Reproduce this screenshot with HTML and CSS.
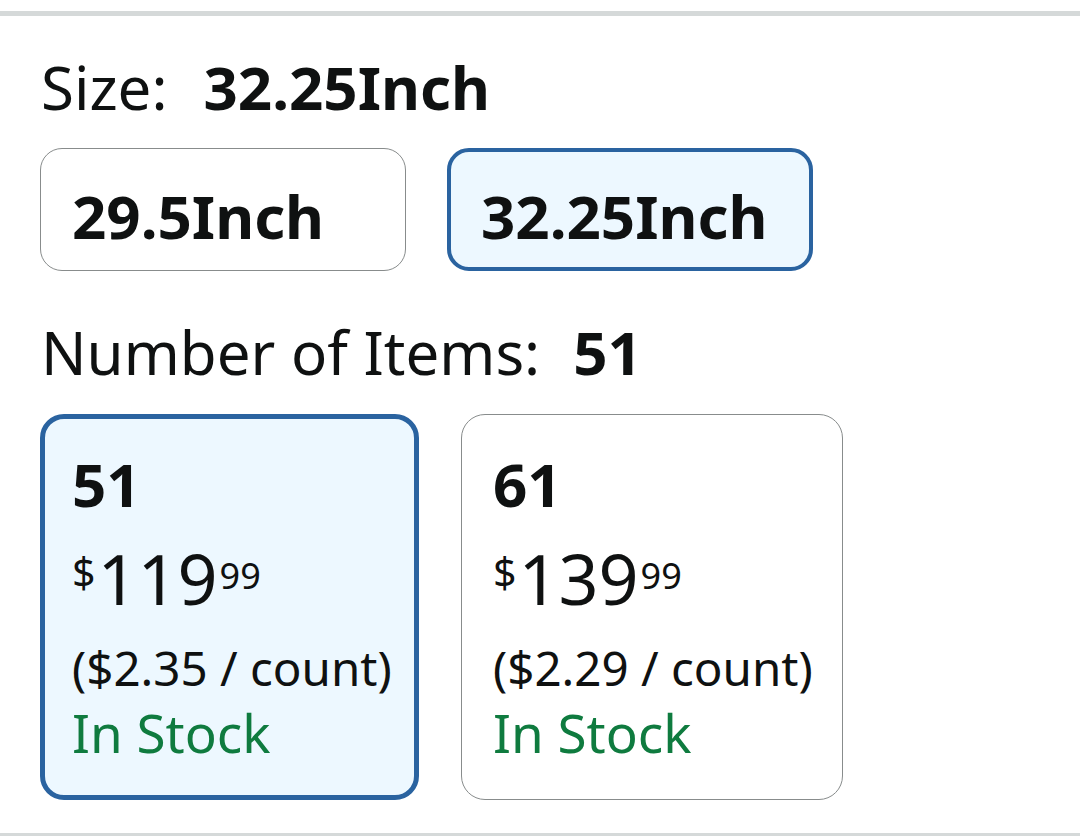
FILE: index.html
```html
<!DOCTYPE html>
<html lang="en">
<head>
<meta charset="utf-8">
<title>Variations</title>
<link rel="stylesheet" href="styles.css">
</head>
<body>
<div class="rule rule-top"></div>
<section class="variations">
  <div class="label"><span class="label-name">Size:</span><span class="label-value">32.25Inch</span></div>
  <div class="size-row">
    <div class="size-btn">29.5Inch</div>
    <div class="size-btn selected">32.25Inch</div>
  </div>
  <div class="label label-items"><span class="label-name">Number of Items:</span><span class="label-value">51</span></div>
  <div class="card-row">
    <div class="card selected">
      <div class="qty">51</div>
      <div class="price"><span class="cur">$</span><span class="whole">119</span><span class="frac">99</span></div>
      <div class="unit">($2.35 / count)</div>
      <div class="stock">In Stock</div>
    </div>
    <div class="card">
      <div class="qty">61</div>
      <div class="price"><span class="cur">$</span><span class="whole">139</span><span class="frac">99</span></div>
      <div class="unit">($2.29 / count)</div>
      <div class="stock">In Stock</div>
    </div>
  </div>
</section>
<div class="rule rule-bottom"></div>
</body>
</html>
```

FILE: styles.css
```css
* { box-sizing: border-box; }
html, body { margin: 0; padding: 0; background: #ffffff; }
body {
  font-family: "Noto Sans", "Open Sans", sans-serif;
  color: #0f1111;
  width: 1080px;
  height: 836px;
  overflow: hidden;
}
.rule { background: #d5d9d9; }
.rule-top { margin-top: 11px; height: 5px; }
.rule-bottom { margin-top: 33px; height: 3px; }

.variations { padding-left: 40px; }

.label {
  margin-top: 35px;
  font-size: 60px;
  line-height: 72px;
  padding-left: 1px;
  white-space: nowrap;
}
.label-name { font-weight: 400; }
.label-value { font-weight: 700; margin-left: 36px; }
.label-items { margin-top: 45px; }
.label-items .label-value { margin-left: 33px; }

.size-row {
  display: flex;
  gap: 41px;
  margin-top: 25px;
}
.size-btn {
  width: 366px;
  height: 123px;
  border: 1px solid #888c8c;
  border-radius: 22px;
  padding: 12px 0 0 31px;
  display: flex;
  align-items: center;
  font-size: 60px;
  font-weight: 700;
  line-height: 72px;
  background: #ffffff;
}
.size-btn.selected {
  border: 4px solid #2a63a0;
  background: #edf8ff;
  padding-left: 30px;
}

.card-row {
  display: flex;
  gap: 42px;
  margin-top: 26px;
}
.card {
  width: 382px;
  height: 386px;
  border: 1px solid #888c8c;
  border-radius: 24px;
  padding: 33px 0 0 31px;
  background: #ffffff;
}
.card.selected {
  width: 379px;
  border: 5px solid #2a63a0;
  background: #edf8ff;
  padding: 29px 0 0 27px;
}
.qty {
  font-size: 60px;
  font-weight: 700;
  line-height: 72px;
  margin-bottom: 18px;
}
.price {
  display: flex;
  align-items: flex-start;
  height: 100px;
}
.cur {
  font-size: 41px;
  line-height: 41px;
  margin-top: 14px;
  margin-right: 2px;
}
.whole {
  font-size: 70px;
  line-height: 80px;
}
.frac {
  font-size: 36px;
  line-height: 36px;
  margin-top: 20px;
  margin-left: 2px;
}
.unit {
  font-size: 47.5px;
  line-height: 60px;
  white-space: nowrap;
}
.stock {
  margin-top: 5px;
  font-size: 53px;
  line-height: 60px;
  color: #0f7b3f;
}
```
